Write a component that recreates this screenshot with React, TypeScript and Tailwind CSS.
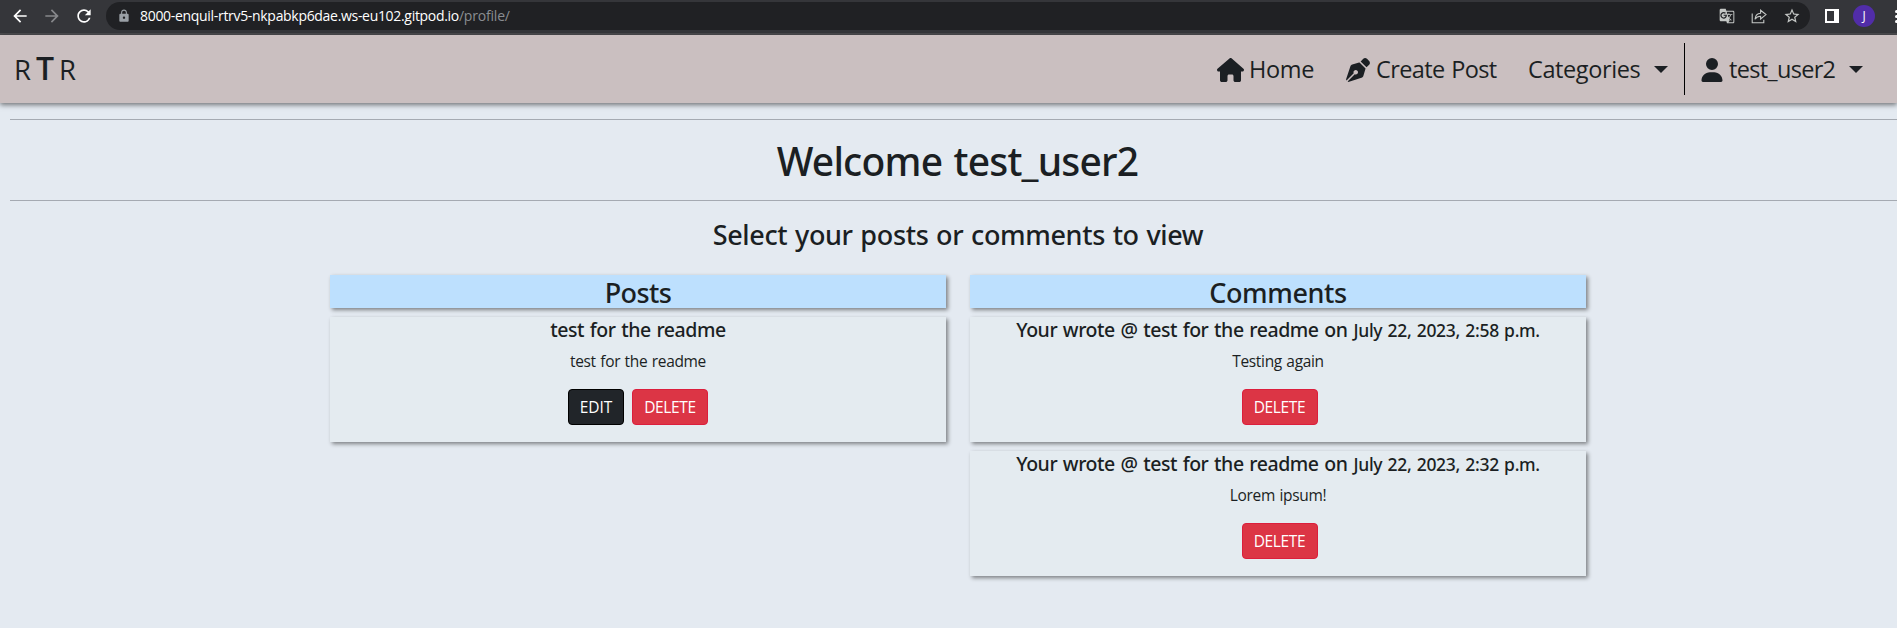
import type { ReactNode } from "react";
import { MdArrowBack, MdArrowForward, MdGTranslate, MdLock, MdRefresh, MdStarBorder } from "react-icons/md";
import { FaHouse, FaPenNib, FaUser } from "react-icons/fa6";

function BrowserBar() {
  return (
    <div className="flex h-[35px] items-center border-b-2 border-[#4a4a4d] bg-[#35363a] pb-px">
      <MdArrowBack className="ml-[10px] size-5 shrink-0 text-white" />
      <MdArrowForward className="ml-3 size-5 shrink-0 text-[#87888b]" />
      <MdRefresh className="ml-3 size-5 shrink-0 text-white" />
      <div className="ml-3 flex h-7 w-[1704px] shrink-0 items-center rounded-full bg-[#202124] text-sm">
        <MdLock className="ml-[11px] size-[14px] text-[#9aa0a6]" />
        <span className="ml-[9px] tracking-[-0.31px] text-white">8000-enquil-rtrv5-nkpabkp6dae.ws-eu102.gitpod.io</span>
        <span className="tracking-[-0.2px] text-[#8a8d91]">/profile/</span>
        <div className="ml-auto flex items-center gap-4 pr-[9px] text-[#c4c7c5]">
          <MdGTranslate className="size-4" />
          <svg viewBox="0 0 16 16" className="size-4" fill="none" stroke="currentColor" strokeWidth="1.1">
            <path d="M1.2 5.5v9.3h11.6v-3" />
            <path d="M4 11.2C4.3 7.4 6.3 5.3 9.6 5.2V2.2L15 6.6 9.6 11V8.2C7.2 8.2 5.4 9 4 11.2Z" />
          </svg>
          <MdStarBorder className="size-[18px]" />
        </div>
      </div>
      <div className="ml-[15px] h-[14px] w-[14px] shrink-0 border-2 border-r-[5px] border-white" />
      <div className="ml-[14px] flex size-[22px] shrink-0 items-center justify-center rounded-full bg-[#512da8] text-xs text-white">
        J
      </div>
      <div className="ml-5 flex w-[2px] shrink-0 flex-col gap-[2px] overflow-hidden">
        <span className="size-[3px] rounded-full bg-white" />
        <span className="size-[3px] rounded-full bg-white" />
        <span className="size-[3px] rounded-full bg-white" />
      </div>
    </div>
  );
}

function Caret({ className }: { className: string }) {
  return (
    <svg viewBox="0 0 14 7" className={`h-[7px] w-[14px] shrink-0 ${className}`} fill="currentColor">
      <path d="M0 0h14L7 7z" />
    </svg>
  );
}

function Navbar() {
  return (
    <nav className="relative flex h-[68px] items-center bg-[#cabfc0] text-[23.5px] whitespace-nowrap shadow-[0_2px_5px_rgba(0,0,0,0.5)]">
      <div className="flex items-baseline pb-px pl-[14px] text-[27.5px] leading-10">
        <span>R</span>
        <span className="ml-[5px] text-[32px] font-semibold">T</span>
        <span className="ml-[5px]">R</span>
      </div>
      <div className="ml-auto flex h-full items-center">
        <FaHouse className="mt-[2px] h-6 w-[27px]" />
        <span className="mt-[2px] ml-[5px] w-[97px] tracking-[-0.3px]">Home</span>
        <FaPenNib className="mt-[2px] size-6" />
        <span className="mt-[2px] ml-[6px] w-[152px] tracking-[-0.6px] [word-spacing:1px]">Create Post</span>
        <span className="mt-[2px] w-[126px] tracking-[-0.4px]">Categories</span>
        <Caret className="mt-px" />
        <div className="ml-4 h-[52px] w-px bg-black" />
        <FaUser className="mt-[2px] ml-4 h-6 w-[22px]" />
        <span className="mt-[2px] ml-[6px] w-[120px] tracking-[-0.7px]">test_user2</span>
        <Caret className="mt-px mr-[34px]" />
      </div>
    </nav>
  );
}

function Column({ title, tracking, children }: { title: string; tracking: string; children: ReactNode }) {
  return (
    <section className="flex w-[616px] flex-col gap-[9px] text-center">
      <h3 className={`h-[33px] bg-[#bde0fe] pt-px font-['Noto_Sans',sans-serif] text-[27px] leading-[34px] font-medium shadow-[2px_2px_4px_rgba(0,0,0,0.45)] ${tracking}`}>
        {title}
      </h3>
      {children}
    </section>
  );
}

function Card({ title, date, body, editable }: { title: string; date?: string; body: string; editable?: boolean }) {
  return (
    <article className="flex h-[125px] flex-col items-center bg-[#e4ebf0] shadow-[2px_2px_4px_rgba(0,0,0,0.45)]">
      <h5 className="mb-2 h-6 font-['Noto_Sans',sans-serif] text-[19.5px] leading-[26px] font-medium tracking-[-0.44px] [word-spacing:1px]">
        {title}
        {date && <small className="ml-[6px] text-[17.5px] tracking-[-0.3px]">{date}</small>}
      </h5>
      <p className="mb-4 h-6 text-[15.5px] leading-[25px] tracking-[-0.32px] [word-spacing:0.7px]">{body}</p>
      <div className={editable ? "flex gap-2" : "ml-[3px] flex"}>
        {editable && (
          <button className="h-9 w-14 rounded border border-black bg-[#212529] pt-px text-[15.5px] text-white">EDIT</button>
        )}
        <button className="h-9 w-[76px] rounded border border-[#dc1e3c] bg-[#dc3545] pt-px text-[15.5px] text-white tracking-[-0.35px]">DELETE</button>
      </div>
    </article>
  );
}

export default function App() {
  return (
    <div className="h-[628px] overflow-hidden bg-[#e4eaf1] font-['Open_Sans','Noto_Sans',sans-serif] text-[#1b1f23]">
      <BrowserBar />
      <Navbar />
      <main className="mt-4">
        <div className="ml-[10px] flex h-[82px] items-center justify-center border-y border-[#a5aab2] pt-[3px] pl-[8px]">
          <h1 className="font-['Noto_Sans',sans-serif] text-[39px] font-medium tracking-[-0.8px] [word-spacing:2px]">Welcome test_user2</h1>
        </div>
        <h2 className="mt-4 ml-[19px] h-[34px] text-center font-['Noto_Sans',sans-serif] text-[27px] leading-[36px] font-medium tracking-[-0.35px] [word-spacing:1px]">
          Select your posts or comments to view
        </h2>
        <div className="mt-6 ml-[19px] flex items-start justify-center gap-6">
          <Column title="Posts" tracking="tracking-[-0.6px]">
            <Card title="test for the readme" body="test for the readme" editable />
          </Column>
          <Column title="Comments" tracking="tracking-[-0.4px]">
            <Card title="Your wrote @ test for the readme on" date="July 22, 2023, 2:58 p.m." body="Testing again" />
            <Card title="Your wrote @ test for the readme on" date="July 22, 2023, 2:32 p.m." body="Lorem ipsum!" />
          </Column>
        </div>
      </main>
    </div>
  );
}
